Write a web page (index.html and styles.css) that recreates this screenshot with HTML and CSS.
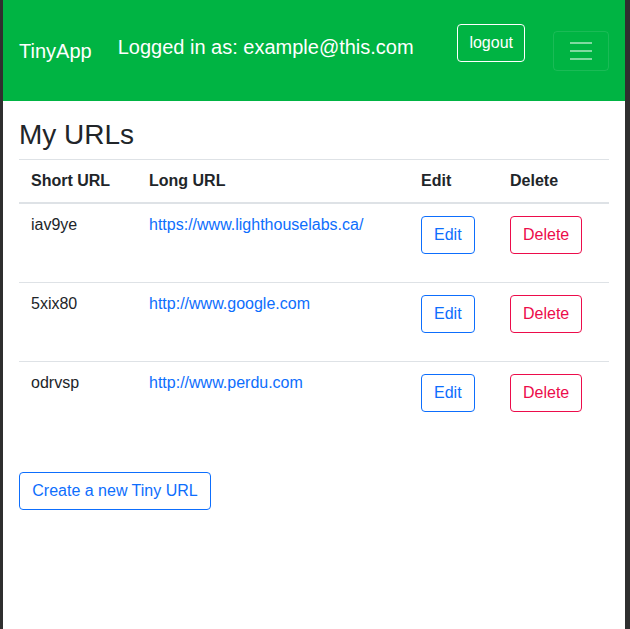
FILE: index.html
```html
<!DOCTYPE html>
<html lang="en">
<head>
<meta charset="utf-8">
<title>TinyApp</title>
<link rel="stylesheet" href="styles.css">
</head>
<body>
<div class="page">
  <nav class="navbar">
    <a class="brand" href="#">TinyApp</a>
    <span class="navbar-text">Logged in as: example@this.com</span>
    <form class="logout-form">
      <button type="button" class="btn btn-light-outline">logout</button>
    </form>
    <button type="button" class="toggler" aria-label="Toggle navigation">
      <svg class="toggler-icon" viewBox="0 0 30 30" width="30" height="30"><path d="M4 7h22M4 15h22M4 23h22" stroke="rgba(255,255,255,0.5)" stroke-width="2" stroke-miterlimit="10" fill="none"/></svg>
    </button>
  </nav>
  <main class="container">
    <h3 class="title">My URLs</h3>
    <table class="table">
      <colgroup>
        <col class="c-short"><col class="c-long"><col class="c-edit"><col class="c-del">
      </colgroup>
      <thead>
        <tr><th>Short URL</th><th>Long URL</th><th>Edit</th><th>Delete</th></tr>
      </thead>
      <tbody>
        <tr>
          <td>iav9ye</td>
          <td><a href="#">https://www.lighthouselabs.ca/</a></td>
          <td><form class="cell-form"><button type="button" class="btn btn-outline-primary">Edit</button></form></td>
          <td><form class="cell-form"><button type="button" class="btn btn-outline-danger">Delete</button></form></td>
        </tr>
        <tr>
          <td>5xix80</td>
          <td><a href="#">http://www.google.com</a></td>
          <td><form class="cell-form"><button type="button" class="btn btn-outline-primary">Edit</button></form></td>
          <td><form class="cell-form"><button type="button" class="btn btn-outline-danger">Delete</button></form></td>
        </tr>
        <tr>
          <td>odrvsp</td>
          <td><a href="#">http://www.perdu.com</a></td>
          <td><form class="cell-form"><button type="button" class="btn btn-outline-primary">Edit</button></form></td>
          <td><form class="cell-form"><button type="button" class="btn btn-outline-danger">Delete</button></form></td>
        </tr>
      </tbody>
    </table>
    <div class="actions">
      <a href="#" class="btn btn-outline-primary btn-create">Create a new Tiny URL</a>
    </div>
  </main>
</div>
</body>
</html>
```

FILE: styles.css
```css
* { box-sizing: border-box; }

html {
  background: #2f2f2f;
  height: 100%;
}

body {
  margin: 0;
  height: 100%;
  font-family: "Liberation Sans", Arial, sans-serif;
  font-size: 16px;
  color: #212529;
}

.page {
  margin-left: 3px;
  width: 622px;
  min-height: 100%;
  background: #fff;
}

.navbar {
  display: flex;
  align-items: center;
  height: 101px;
  padding: 0 16px;
  background: #00b443;
}

.brand {
  font-size: 20px;
  line-height: 30px;
  color: #fff;
  text-decoration: none;
  margin-right: 26px;
}

.navbar-text {
  font-size: 20px;
  line-height: 30px;
  color: #fff;
  margin-bottom: 7px;
}

.logout-form {
  margin: 0 0 16px auto;
}

.btn {
  display: inline-block;
  font-family: inherit;
  font-size: 16px;
  line-height: 24px;
  padding: 6px 12px;
  border: 1px solid transparent;
  border-radius: 4px;
  background: transparent;
  text-decoration: none;
  cursor: pointer;
}

.btn-light-outline {
  color: #fff;
  border-color: #fff;
  padding: 6px 11px;
}

.toggler {
  margin-left: 28px;
  display: flex;
  padding: 4px 12px;
  border: 1px solid rgba(255, 255, 255, 0.1);
  border-radius: 4px;
  background: transparent;
}

.toggler-icon {
  display: block;
  width: 30px;
  height: 30px;
}

.container {
  padding: 17px 16px 0;
}

.title {
  margin: 0 0 7px;
  font-size: 28px;
  line-height: 1.2;
  font-weight: 500;
}

.table {
  width: 100%;
  table-layout: fixed;
  border-collapse: collapse;
  margin-bottom: 16px;
}

.c-short { width: 118px; }
.c-long { width: 272px; }
.c-edit { width: 89px; }
.c-del { width: 111px; }

.table th,
.table td {
  padding: 12px;
  text-align: left;
  vertical-align: top;
  line-height: normal;
  border-top: 1px solid #dee2e6;
}

.table th {
  font-weight: 700;
  border-bottom: 2px solid #dee2e6;
}

.table tbody tr:first-child td {
  border-top: 0;
}

.table a {
  color: #0d6efd;
  text-decoration: none;
}

.cell-form {
  margin: 0 0 16px;
}

.btn-outline-primary {
  color: #0d6efd;
  border-color: #0d6efd;
}

.btn-outline-danger {
  color: #ec0c4b;
  border-color: #ec0c4b;
}

.actions {
  padding-top: 16px;
}

.btn-create {
  padding: 6px 12px 6px 12px;
  min-width: 192px;
  text-align: center;
}
```
